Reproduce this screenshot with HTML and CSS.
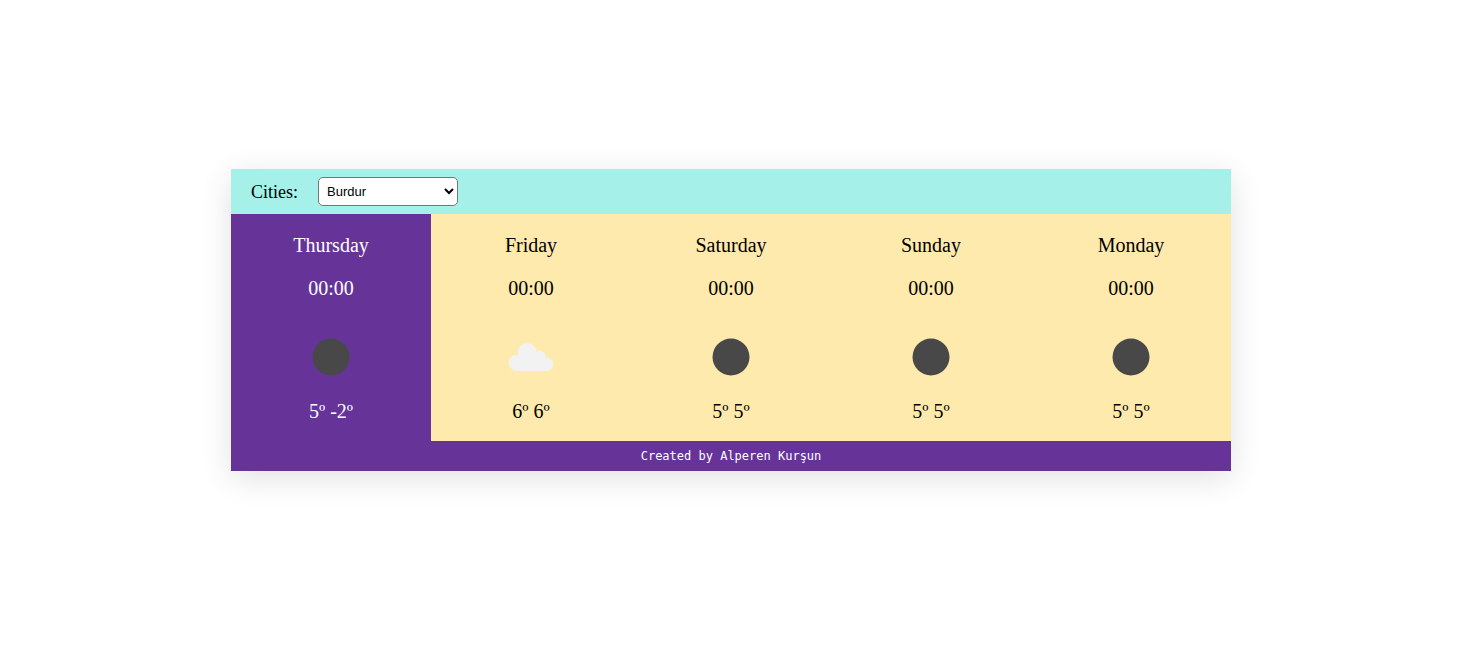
FILE: index.html
```html
<!DOCTYPE html>
<html lang="en">
<head>
<meta charset="utf-8">
<title>Weather</title>
<link rel="stylesheet" href="styles.css">
</head>
<body>
<main class="card">
  <header class="bar">
    <label class="bar-label" for="city">Cities:</label>
    <select class="city" id="city"><option>Burdur</option></select>
  </header>
  <section class="days">
    <article class="day today">
      <p class="name">Thursday</p><p class="time">00:00</p>
      <svg class="icon" viewBox="0 0 64 64"><circle cx="32" cy="32" r="18.5" fill="#484848"/></svg>
      <p class="temp">5º -2º</p>
    </article>
    <article class="day">
      <p class="name">Friday</p><p class="time">00:00</p>
      <svg class="icon" viewBox="0 0 64 64" fill="#f2f2f2">
        <circle cx="18" cy="37.700" r="8.300"/>
        <circle cx="28.300" cy="27.400" r="9.400"/>
        <circle cx="40.800" cy="31.700" r="6"/>
        <circle cx="47.600" cy="39.300" r="6.700"/>
        <path d="M18 46V31h24l5.600 3V46z"/>
      </svg>
      <p class="temp">6º 6º</p>
    </article>
    <article class="day">
      <p class="name">Saturday</p><p class="time">00:00</p>
      <svg class="icon" viewBox="0 0 64 64"><circle cx="32" cy="32" r="18.5" fill="#484848"/></svg>
      <p class="temp">5º 5º</p>
    </article>
    <article class="day">
      <p class="name">Sunday</p><p class="time">00:00</p>
      <svg class="icon" viewBox="0 0 64 64"><circle cx="32" cy="32" r="18.5" fill="#484848"/></svg>
      <p class="temp">5º 5º</p>
    </article>
    <article class="day">
      <p class="name">Monday</p><p class="time">00:00</p>
      <svg class="icon" viewBox="0 0 64 64"><circle cx="32" cy="32" r="18.5" fill="#484848"/></svg>
      <p class="temp">5º 5º</p>
    </article>
  </section>
  <footer class="credit">Created by Alperen Kurşun</footer>
</main>
</body>
</html>
```
FILE: styles.css
```css
* { box-sizing: border-box; }
body {
  margin: 0;
  min-height: 100vh;
  padding: 0 12px 13px 0;
  display: flex;
  align-items: center;
  justify-content: center;
  background: #fff;
  font-family: "Liberation Serif", "Times New Roman", serif;
}
.card {
  width: 100%;
  max-width: 1000px;
  box-shadow: 0 7px 30px rgba(0, 0, 0, 0.12);
}
.bar {
  display: flex;
  align-items: center;
  gap: 20px;
  padding: 8px 20px;
  background: #a5f1e9;
}
.bar-label { font-size: 18px; line-height: 22px; }
.city {
  width: 140px;
  height: 29px;
  padding: 0 4px;
  border: 1px solid #767676;
  border-radius: 5px;
  background-color: #fff;
  color: #000;
  font: 14px "Liberation Sans", Arial, sans-serif;
  font-size: 13px;
}
.days { display: grid; grid-template-columns: repeat(5, 1fr); background: #ffeaae; }
.day {
  display: flex;
  flex-direction: column;
  align-items: center;
  padding: 20px 0 18px;
  font-size: 20px;
  line-height: 23px;
}
.today { background: #663399; color: #fff; }
.day p { margin: 0; }
.day .time { margin: 20px 0 25px; }
.icon { width: 64px; height: 64px; margin-bottom: 11px; }
.credit {
  padding: 8px;
  background: #663399;
  color: #fff;
  text-align: center;
  font: 12px/14px "DejaVu Sans Mono", monospace;
}
```
